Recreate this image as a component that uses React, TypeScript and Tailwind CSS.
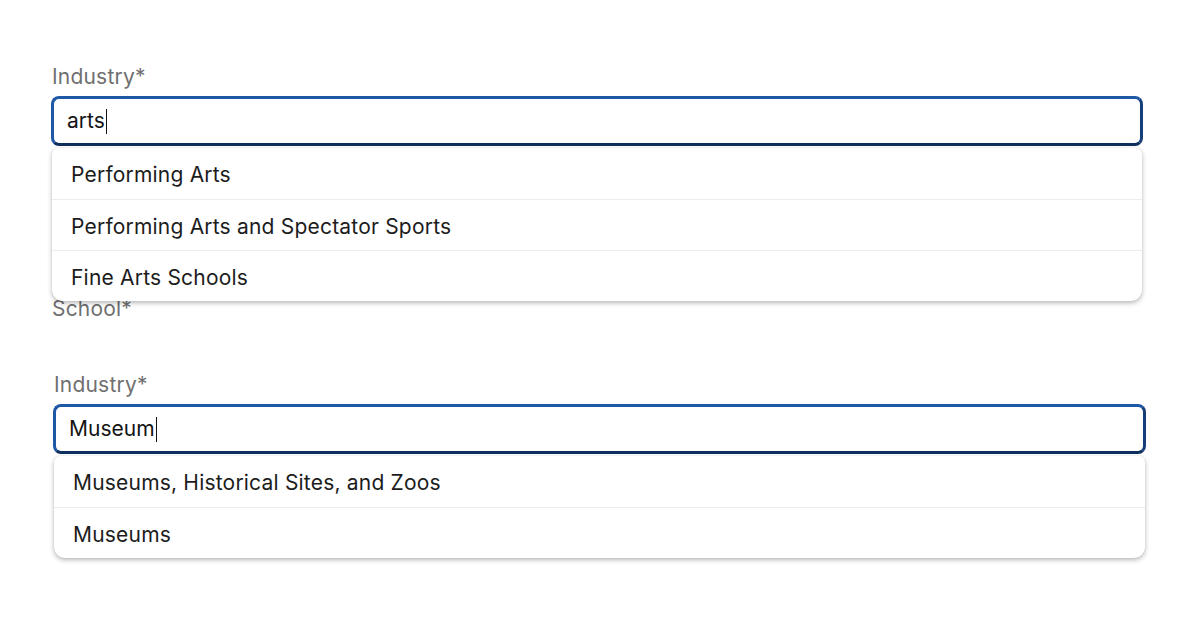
import React from "react";

const font = { fontFamily: "Inter, 'Noto Sans', 'Liberation Sans', sans-serif" };

function Field({
  value,
  options,
  shift,
}: {
  value: string;
  options: string[];
  shift?: boolean;
}) {
  return (
    <div className={shift ? "relative ml-[2px] w-[1093px]" : "relative w-[1092px]"}>
      <div className="flex h-[50px] items-center rounded-[8px] border-[3px] border-[#1f58a6] border-b-[#0f2f5e] border-r-[#163f7a] bg-white pl-[13px]">
        <span className="text-[21px] leading-[26px] text-[#141414]">{value}</span>
        <span className="ml-[1px] h-[25px] w-[1.5px] bg-[#111]" />
      </div>
      <div className="absolute left-[1px] right-[1px] top-[52px] z-10 overflow-hidden rounded-t-[6px] rounded-b-[11px] bg-white shadow-[0_2px_5px_rgba(0,0,0,0.28),0_0_1px_rgba(0,0,0,0.15)]">
        {options.map((o, i) => (
          <div
            key={o}
            className={
              "flex h-[51px] items-center pl-[19px] pt-[3px] text-[21px] tracking-[0.2px] text-[#1c1c1c] " +
              (i > 0 ? "border-t border-[#ececec]" : "")
            }
          >
            {o}
          </div>
        ))}
      </div>
    </div>
  );
}

export default function App() {
  return (
    <div className="min-h-[627px] w-[1200px] bg-white pl-[51px] pt-[65px]" style={font}>
      <div className="pl-[1px] text-[21px] leading-[24px] tracking-[0.2px] text-[#6f6f6f]">Industry*</div>
      <div className="mt-[7px]">
        <Field
          value="arts"
          options={["Performing Arts", "Performing Arts and Spectator Sports", "Fine Arts Schools"]}
        />
      </div>
      <div className="mt-[151px] pl-[1px] text-[21px] leading-[24px] tracking-[0.2px] text-[#6f6f6f]">School*</div>
      <div className="ml-[3px] mt-[52px] text-[21px] leading-[24px] tracking-[0.2px] text-[#6f6f6f]">Industry*</div>
      <div className="mt-[7px]">
        <Field
          shift
          value="Museum"
          options={["Museums, Historical Sites, and Zoos", "Museums"]}
        />
      </div>
    </div>
  );
}
